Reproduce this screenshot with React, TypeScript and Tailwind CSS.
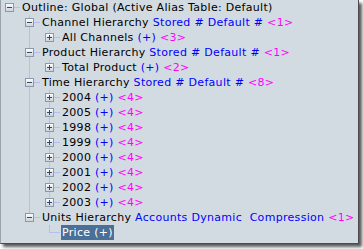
import React from "react";

type Part = [string, "k" | "b" | "m"];
type Row = {
  level: number;
  anc: boolean[];
  last: boolean;
  root?: boolean;
  box: "plus" | "minus" | null;
  parts: Part[];
  selected?: boolean;
};

const L2 = (year: string, anc: boolean[], last: boolean): Row => ({
  level: 2,
  anc,
  last,
  box: "plus",
  parts: [
    [year, "k"],
    [" (+)", "b"],
    [" <4>", "m"],
  ],
});

const rows: Row[] = [
  { level: 0, anc: [], last: true, root: true, box: "minus", parts: [["Outline: Global (Active Alias Table: Default)", "k"]] },
  { level: 1, anc: [false], last: false, box: "minus", parts: [["Channel Hierarchy", "k"], [" Stored # Default # ", "b"], ["<1>", "m"]] },
  { level: 2, anc: [false, true], last: true, box: "plus", parts: [["All Channels", "k"], [" (+)", "b"], [" <3>", "m"]] },
  { level: 1, anc: [false], last: false, box: "minus", parts: [["Product Hierarchy", "k"], [" Stored # Default # ", "b"], ["<1>", "m"]] },
  { level: 2, anc: [false, true], last: true, box: "plus", parts: [["Total Product", "k"], [" (+)", "b"], [" <2>", "m"]] },
  { level: 1, anc: [false], last: false, box: "minus", parts: [["Time Hierarchy", "k"], [" Stored # Default # ", "b"], ["<8>", "m"]] },
  L2("2004", [false, true], false),
  L2("2005", [false, true], false),
  L2("1998", [false, true], false),
  L2("1999", [false, true], false),
  L2("2000", [false, true], false),
  L2("2001", [false, true], false),
  L2("2002", [false, true], false),
  L2("2003", [false, true], true),
  { level: 1, anc: [false], last: true, box: "minus", parts: [["Units Hierarchy", "k"], [" Accounts Dynamic\u00a0\u00a0Compression ", "b"], ["<1>", "m"]] },
  { level: 2, anc: [false, false], last: true, box: null, selected: true, parts: [["Price (+)", "k"]] },
];

const LINE = "#b8bcf4";

function AncCell({ line }: { line: boolean }) {
  return (
    <svg width="20" height="15" className="shrink-0 block">
      {line && <line x1="9.5" y1="0" x2="9.5" y2="15" stroke={LINE} strokeWidth="1" />}
    </svg>
  );
}

function ConnCell({ root, last, box }: { root?: boolean; last: boolean; box: Row["box"] }) {
  return (
    <svg width="20" height="15" className="shrink-0 block">
      <defs>
        <linearGradient id="bx" x1="0" y1="0" x2="0" y2="1">
          <stop offset="0" stopColor="#ffffff" />
          <stop offset="1" stopColor="#c9d1da" />
        </linearGradient>
      </defs>
      {!root && <line x1="9.5" y1="0" x2="9.5" y2="7.5" stroke={LINE} strokeWidth="1" />}
      {!root && !last && <line x1="9.5" y1="7.5" x2="9.5" y2="15" stroke={LINE} strokeWidth="1" />}
      <line x1="9" y1="7.5" x2="20" y2="7.5" stroke={LINE} strokeWidth="1" />
      {box && (
        <g>
          <rect x="5.5" y="3.5" width="8" height="8" fill="url(#bx)" stroke="#8a9aab" strokeWidth="1" />
          <line x1="7" y1="7.5" x2="12" y2="7.5" stroke="#3a4a5e" strokeWidth="1" />
          {box === "plus" && <line x1="9.5" y1="5" x2="9.5" y2="10" stroke="#3a4a5e" strokeWidth="1" />}
        </g>
      )}
    </svg>
  );
}

const colorCls: Record<string, string> = {
  k: "text-black",
  b: "text-[#0000ff]",
  m: "text-[#ff00ff]",
};

export default function App() {
  return (
    <div className="w-[363px] h-[249px] bg-white overflow-hidden">
      <div className="w-[359px] h-[244px] bg-[#d3dbe2] border-l border-[#9aa2aa] border-r border-b border-r-[#4a4a4a] border-b-[#4a4a4a] shadow-[3px_3px_3px_rgba(0,0,0,0.65)] font-['DejaVu_Sans',Verdana,sans-serif] text-[11px] tracking-[0.3px] leading-[15px] whitespace-pre">
        <div className="flex flex-col pt-0 -ml-px">
          {rows.map((r, i) => (
            <div key={i} className="flex items-center h-[15px]">
              {r.anc.map((a, j) => (
                <AncCell key={j} line={a} />
              ))}
              <ConnCell root={r.root} last={r.last} box={r.box} />
              <div
                className={
                  "ml-px px-px h-[15px] " + (r.selected ? "bg-[#4a6f98]" : "")
                }
              >
                {r.parts.map(([t, c], k) => (
                  <span key={k} className={r.selected ? "text-white" : colorCls[c]}>
                    {t}
                  </span>
                ))}
              </div>
            </div>
          ))}
        </div>
      </div>
    </div>
  );
}
